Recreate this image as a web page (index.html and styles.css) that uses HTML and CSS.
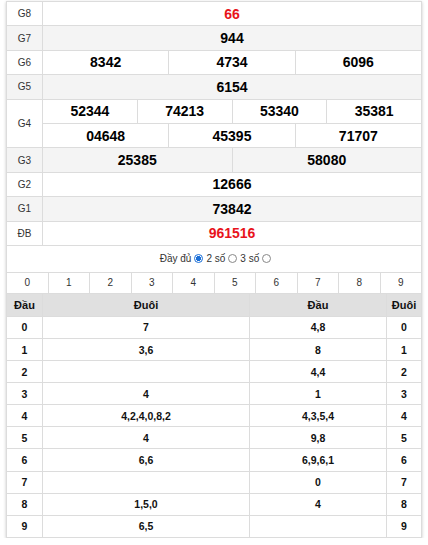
FILE: index.html
```html
<!DOCTYPE html>
<html lang="vi">
<head>
<meta charset="utf-8">
<title>Kết quả xổ số</title>
<link rel="stylesheet" href="styles.css">
</head>
<body>
<div class="box">
  <div class="kq">
    <div class="lbl">G8</div><div class="num red s12">66</div>
    <div class="lbl alt">G7</div><div class="num alt s12">944</div>
    <div class="lbl">G6</div><div class="num s4">8342</div><div class="num s4">4734</div><div class="num s4">6096</div>
    <div class="lbl alt">G5</div><div class="num alt s12">6154</div>
    <div class="lbl g4">G4</div><div class="num s3">52344</div><div class="num s3">74213</div><div class="num s3">53340</div><div class="num s3">35381</div>
    <div class="num s4">04648</div><div class="num s4">45395</div><div class="num s4">71707</div>
    <div class="lbl alt">G3</div><div class="num alt s6">25385</div><div class="num alt s6">58080</div>
    <div class="lbl">G2</div><div class="num s12">12666</div>
    <div class="lbl alt">G1</div><div class="num alt s12">73842</div>
    <div class="lbl">ĐB</div><div class="num red s12">961516</div>
  </div>
  <div class="opts">
    <span>Đầy đủ</span><span class="radio on"></span><span>2 số</span><span class="radio"></span><span>3 số</span><span class="radio"></span>
  </div>
  <div class="digits">
    <div>0</div><div>1</div><div>2</div><div>3</div><div>4</div><div>5</div><div>6</div><div>7</div><div>8</div><div>9</div>
  </div>
  <div class="loto">
    <div class="hd">Đầu</div><div class="hd">Đuôi</div><div class="hd">Đầu</div><div class="hd">Đuôi</div>
    <div>0</div><div>7</div><div>4,8</div><div>0</div>
    <div>1</div><div>3,6</div><div>8</div><div>1</div>
    <div>2</div><div></div><div>4,4</div><div>2</div>
    <div>3</div><div>4</div><div>1</div><div>3</div>
    <div>4</div><div>4,2,4,0,8,2</div><div>4,3,5,4</div><div>4</div>
    <div>5</div><div>4</div><div>9,8</div><div>5</div>
    <div>6</div><div>6,6</div><div>6,9,6,1</div><div>6</div>
    <div>7</div><div></div><div>0</div><div>7</div>
    <div>8</div><div>1,5,0</div><div>4</div><div>8</div>
    <div>9</div><div>6,5</div><div></div><div>9</div>
  </div>
</div>
</body>
</html>
```

FILE: styles.css
```css
* { box-sizing: border-box; }
html, body { margin: 0; padding: 0; background: #fff; }
body { font-family: "Liberation Sans", Arial, sans-serif; color: #000; }

.box {
  width: 416px;
  margin: 1px 6px 0;
  background: #dcdcdc;
  padding: 1px;
  display: flex;
  flex-direction: column;
  gap: 1px;
  box-shadow: 0 1px 3px rgba(0, 0, 0, 0.22);
}

.kq {
  display: grid;
  grid-template-columns: 35px repeat(12, 1fr);
  grid-auto-rows: 23.4px;
  gap: 1px;
}
.kq > div {
  background: #fff;
  display: flex;
  align-items: center;
  justify-content: center;
}
.kq > .alt { background: #f4f4f4; }
.lbl { font-size: 10px; color: #333; }
.g4 { grid-row: span 2; }
.num { font-size: 14px; font-weight: bold; }
.num.red { color: #e8131b; }
.s12 { grid-column: span 12; }
.s6 { grid-column: span 6; }
.s4 { grid-column: span 4; }
.s3 { grid-column: span 3; }

.opts {
  height: 26px;
  background: #fff;
  display: flex;
  align-items: center;
  justify-content: center;
  gap: 2px;
  font-size: 10px;
  color: #333;
  padding-left: 4px;
}
.radio {
  width: 9px;
  height: 9px;
  border-radius: 50%;
  border: 1px solid #888;
  background: #fff;
  margin: 0 1px;
}
.radio.on {
  border-color: #1a6fd8;
  background: radial-gradient(circle, #1a6fd8 0 2.3px, #fff 2.8px);
}

.digits {
  display: grid;
  grid-template-columns: repeat(10, 1fr);
  grid-auto-rows: 20px;
  gap: 1px;
}
.digits > div {
  background: #fff;
  display: flex;
  align-items: center;
  justify-content: center;
  font-size: 10px;
  color: #333;
}

.loto {
  display: grid;
  grid-template-columns: 35px 206px 136px 34px;
  grid-template-rows: 22px;
  grid-auto-rows: 21.1px;
  gap: 1px;
}
.loto > div {
  background: #fff;
  display: flex;
  align-items: center;
  justify-content: center;
  font-size: 10.5px;
  font-weight: bold;
  color: #111;
}
.loto > .hd { background: #e0e0e0; font-size: 11px; }
```
